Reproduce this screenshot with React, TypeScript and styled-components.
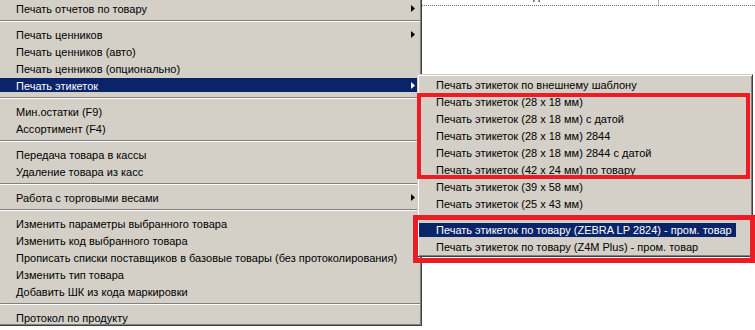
import React from 'react';
import styled, { createGlobalStyle } from 'styled-components';

const GlobalStyle = createGlobalStyle`
  body {
    margin: 0;
    background: #ffffff;
    font-family: "Liberation Sans", Arial, sans-serif;
  }
`;

const Screen = styled.div`
  position: relative;
  width: 755px;
  height: 330px;
  overflow: hidden;
  display: flex;
  align-items: flex-start;
  background: #ffffff;
`;

const MainMenu = styled.div`
  flex: none;
  width: 425px;
  margin-left: -3px;
  margin-top: -2px;
  box-sizing: border-box;
  background: #d4d0c8;
  border: 1px solid;
  border-color: #d4d0c8 #404040 #404040 #d4d0c8;
  box-shadow: inset 1px 1px #ffffff, inset -1px -1px #808080;
  display: flex;
  flex-direction: column;
`;

const Item = styled.div<{ $active?: boolean }>`
  height: 14px;
  margin: 2px 1px 1px 1px;
  padding: 0 5px 0 17px;
  display: flex;
  align-items: center;
  font-size: 11px;
  color: ${(p) => (p.$active ? '#ffffff' : '#000000')};
  background: ${(p) => (p.$active ? '#0a246a' : 'transparent')};
  white-space: nowrap;
`;

const Label = styled.span`
  flex: 1;
  padding-top: 1px;
`;

const SubMenu = styled.div`
  position: absolute;
  left: 417px;
  top: 74px;
  width: 336px;
  box-sizing: border-box;
  background: #d4d0c8;
  border: 1px solid;
  border-color: #d4d0c8 #404040 #404040 #d4d0c8;
  box-shadow: inset 1px 1px #ffffff, inset -1px -1px #808080;
  padding: 1px 0 1px 0;
  display: flex;
  flex-direction: column;

  ${Item} {
    margin-right: 16px;
  }

  ${Label} {
    padding-top: 0;
  }
`;

const Separator = styled.div`
  height: 9px;
  box-sizing: border-box;
  padding: 4px 1px 0 1px;

  &::before {
    content: '';
    display: block;
    border-top: 1px solid #808080;
    border-bottom: 1px solid #ffffff;
  }
`;

const Workspace = styled.div`
  flex: 1;
  align-self: stretch;
  background: #ffffff;
`;

const GridRow = styled.div`
  height: 5px;
  display: flex;
  border-bottom: 1px dotted #6f6f6f;
`;

const GridCell = styled.div<{ $width: number }>`
  width: ${(p) => p.$width}px;
  flex: none;
  overflow: hidden;
  border-right: 1px solid #9fb0cc;
  padding-left: 104px;
  box-sizing: border-box;
  font-size: 11px;
  line-height: 11px;
`;

const CellText = styled.span`
  display: block;
  margin-top: -9px;
`;

const Callout = styled.div<{ $w: number }>`
  position: absolute;
  box-sizing: border-box;
  border: ${(p) => p.$w}px solid #ec1c24;
  pointer-events: none;
`;

const Arrow = ({ light }: { light?: boolean }) => (
  <svg width="4" height="7" viewBox="0 0 4 7">
    <polygon points="0,0 4,3.5 0,7" fill={light ? '#ffffff' : '#000000'} />
  </svg>
);

type Entry = { label?: string; arrow?: boolean; active?: boolean; sep?: boolean };

const mainItems: Entry[] = [
  { label: 'Печать отчетов по товару', arrow: true },
  { sep: true },
  { label: 'Печать ценников', arrow: true },
  { label: 'Печать ценников (авто)' },
  { label: 'Печать ценников (опционально)' },
  { label: 'Печать этикеток', arrow: true, active: true },
  { sep: true },
  { label: 'Мин.остатки (F9)' },
  { label: 'Ассортимент (F4)' },
  { sep: true },
  { label: 'Передача товара в кассы' },
  { label: 'Удаление товара из касс' },
  { sep: true },
  { label: 'Работа с торговыми весами', arrow: true },
  { sep: true },
  { label: 'Изменить параметры выбранного товара' },
  { label: 'Изменить код выбранного товара' },
  { label: 'Прописать списки поставщиков в базовые товары (без протоколирования)' },
  { label: 'Изменить тип товара' },
  { label: 'Добавить ШК из кода маркировки' },
  { sep: true },
  { label: 'Протокол по продукту' },
];

const subItems: Entry[] = [
  { label: 'Печать этикеток по внешнему шаблону' },
  { label: 'Печать этикеток (28 x 18 мм)' },
  { label: 'Печать этикеток (28 x 18 мм) с датой' },
  { label: 'Печать этикеток (28 x 18 мм) 2844' },
  { label: 'Печать этикеток (28 x 18 мм) 2844 с датой' },
  { label: 'Печать этикеток (42 x 24 мм) по товару' },
  { label: 'Печать этикеток (39 x 58 мм)' },
  { label: 'Печать этикеток (25 x 43 мм)' },
  { sep: true },
  { label: 'Печать этикеток по товару (ZEBRA LP 2824) - пром. товар', active: true },
  { label: 'Печать этикеток по товару (Z4M Plus) - пром. товар' },
];

const renderEntries = (entries: Entry[]) =>
  entries.map((e, i) =>
    e.sep ? (
      <Separator key={i} />
    ) : (
      <Item key={i} $active={e.active}>
        <Label>{e.label}</Label>
        {e.arrow && <Arrow light={e.active} />}
      </Item>
    )
  );

export default function App() {
  return (
    <>
      <GlobalStyle />
      <Screen>
        <MainMenu>{renderEntries(mainItems)}</MainMenu>
        <Workspace>
          <GridRow>
            <GridCell $width={237}>
              <CellText>Ед</CellText>
            </GridCell>
          </GridRow>
        </Workspace>
        <SubMenu>{renderEntries(subItems)}</SubMenu>
        <Callout $w={4} style={{ left: 417, top: 93, width: 333, height: 86 }} />
        <Callout $w={5} style={{ left: 413, top: 215, width: 342, height: 48 }} />
      </Screen>
    </>
  );
}
